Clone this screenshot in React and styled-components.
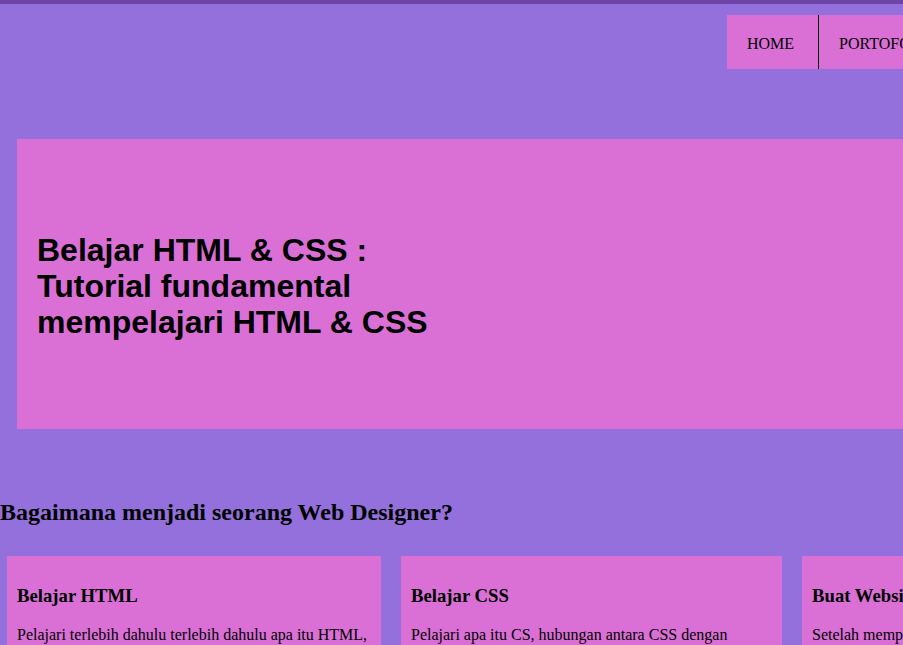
import React from "react";
import styled, { createGlobalStyle } from "styled-components";

const Global = createGlobalStyle`
  html, body {
    margin: 0;
    padding: 0;
    overflow: hidden;
    background: #9370db;
  }
  body {
    font-family: "Liberation Serif", "Times New Roman", serif;
    color: #000;
  }
`;

const Page = styled.div`
  width: 1240px;
  min-height: 645px;
  background: #9370db;
`;

const TopBar = styled.div`
  height: 4px;
  background: #6c45a6;
`;

const Header = styled.header`
  display: flex;
  padding: 11px 0 0 727px;
`;

const Nav = styled.ul`
  display: flex;
  list-style: none;
  margin: 0;
  padding: 0;
  background: #da70d6;
`;

const NavItem = styled.li`
  box-sizing: border-box;
  height: 54px;
  line-height: 50px;
  padding: 4px 24px 0 20px;
  font-size: 16px;
  border-left: ${(p) => (p.$first ? "none" : "1px solid #000")};
  white-space: nowrap;
`;

const Hero = styled.section`
  margin: 70px 0 0 17px;
  height: 290px;
  background: #da70d6;
  display: flex;
  align-items: center;
  padding: 4px 20px 0;
  box-sizing: border-box;
`;

const HeroTitle = styled.h1`
  margin: 0;
  width: 400px;
  font-family: "Liberation Sans", Arial, sans-serif;
  font-weight: bold;
  font-size: 32px;
  line-height: 36px;
`;

const SectionTitle = styled.h2`
  margin: 69px 0 0 0;
  font-size: 24px;
  font-weight: bold;
  line-height: 28px;
`;

const Cards = styled.div`
  display: grid;
  grid-template-columns: 374px 381px 381px;
  gap: 20px;
  margin-top: 30px;
  padding-left: 7px;
`;

const Card = styled.article`
  background: #da70d6;
  padding: 10px;
  min-height: 200px;
`;

const CardTitle = styled.h3`
  margin: 19px 0 18px;
  font-size: 18.72px;
  font-weight: bold;
  line-height: 22px;
`;

const CardText = styled.p`
  margin: 0;
  font-size: 16px;
  line-height: 19px;
`;

const navItems = ["HOME", "PORTOFOLIO", "ABOUT", "CONTACT"];

const cards = [
  {
    title: "Belajar HTML",
    text: "Pelajari terlebih dahulu terlebih dahulu apa itu HTML, struktur dasar HTML dan tag-tag yang sering digunakan.",
  },
  {
    title: "Belajar CSS",
    text: "Pelajari apa itu CS, hubungan antara CSS dengan HTML, dan cara menghias halaman web.",
  },
  {
    title: "Buat Website",
    text: "Setelah mempelajari HTML dan CSS, buatlah website sederhana milikmu sendiri.",
  },
];

export default function App() {
  return (
    <Page>
      <Global />
      <TopBar />
      <Header>
        <Nav>
          {navItems.map((n, i) => (
            <NavItem key={n} $first={i === 0}>
              {n}
            </NavItem>
          ))}
        </Nav>
      </Header>
      <Hero>
        <HeroTitle>Belajar HTML &amp; CSS : Tutorial fundamental mempelajari HTML &amp; CSS</HeroTitle>
      </Hero>
      <SectionTitle>Bagaimana menjadi seorang Web Designer?</SectionTitle>
      <Cards>
        {cards.map((c) => (
          <Card key={c.title}>
            <CardTitle>{c.title}</CardTitle>
            <CardText>{c.text}</CardText>
          </Card>
        ))}
      </Cards>
    </Page>
  );
}
